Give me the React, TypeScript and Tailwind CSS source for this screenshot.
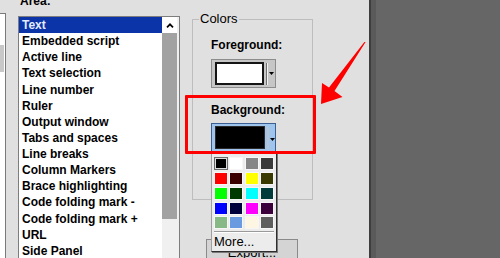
const items = [
  'Text',
  'Embedded script',
  'Active line',
  'Text selection',
  'Line number',
  'Ruler',
  'Output window',
  'Tabs and spaces',
  'Line breaks',
  'Column Markers',
  'Brace highlighting',
  'Code folding mark -',
  'Code folding mark +',
  'URL',
  'Side Panel',
];

const palette = [
  '#000000', '#ffffff', '#868686', '#3a3a3a',
  '#ff0000', '#3a0000', '#ffff00', '#3a3a00',
  '#00ff00', '#003a00', '#00ffff', '#003c3c',
  '#0000ff', '#00003c', '#ff00ff', '#3c003c',
  '#86b986', '#6a9be0', '#fdf6e2', '#5e5e5e',
];

function DownArrow() {
  return (
    <svg width="5" height="3" viewBox="0 0 5 3" className="shrink-0">
      <path d="M0 0 H5 L2.5 3 Z" fill="#000" />
    </svg>
  );
}

export default function App() {
  return (
    <div className="relative w-[500px] h-[258px] overflow-hidden bg-[#e0e0e0] flex items-start font-['Liberation_Sans',Arial,sans-serif] text-black">
      {/* previous list, cut off at the left edge */}
      <div className="w-[6px] h-[245px] mt-[13px] bg-white border-t border-r border-[#7a7a7a]">
        <div className="mt-[31px] w-[4px] h-[27px] bg-[#c8c8c8]" />
      </div>

      {/* Area list */}
      <div className="ml-[12px] w-[162px] flex flex-col">
        <div className="-mt-[7px] pl-[2px] text-[12px] leading-4 font-bold">Area:</div>
        <div className="mt-[7px] h-[260px] flex border border-[#7d7d7d] bg-white">
          <div className="w-[143px] flex flex-col">
            {items.map((item, i) => (
              <div
                key={item}
                className={
                  i === 0
                    ? 'h-[16.14px] leading-4 pl-[3px] text-[12px] font-bold bg-[#0b34a8] text-[#e4ecff] whitespace-nowrap'
                    : 'h-[16.14px] leading-4 pl-[3px] text-[12px] font-bold whitespace-nowrap'
                }
              >
                {item}
              </div>
            ))}
          </div>
          <div className="w-[17px] flex flex-col bg-[#f0f0f0]">
            <div className="h-[16px] w-[15px] bg-white flex items-center justify-center">
              <svg width="8" height="5" viewBox="0 0 8 5">
                <path d="M1 4.3 L4 1.3 L7 4.3" fill="none" stroke="#000" strokeWidth="1.7" />
              </svg>
            </div>
            <div className="h-[186px] w-[15px] bg-[#a2a2a2]" />
          </div>
        </div>
      </div>

      {/* Colors group + Export */}
      <div className="ml-[12px] w-[121px] flex flex-col">
        <fieldset className="mt-[11px] h-[189px] border border-[#bdbdbd] pl-[18px]">
          <legend className="ml-[-12px] px-[1px] text-[13px] leading-4">Colors</legend>
          <div className="mt-[10px] text-[12px] leading-4 font-bold">Foreground:</div>
          <div className="mt-[6px] w-[65px] h-[29px] border border-[#8c8c8c] bg-[#c6c6c6] flex items-center pl-[3px]">
            <div className="w-[49px] h-[23px] border-2 border-[#151515] bg-white" />
            <div className="ml-[2px] w-[2px] h-[22px] border-l border-r border-l-[#6e6e6e] border-r-[#f2f2f2]" />
            <div className="ml-[1px]"><DownArrow /></div>
          </div>
          <div className="mt-[14px] text-[12px] leading-4 font-bold">Background:</div>
          <div className="mt-[5px] w-[65px] h-[29px] border border-[#3b5f92] bg-[#a0c5ec] flex items-center pl-[3px]">
            <div className="w-[50px] h-[23px] border border-[#2a2a2a] bg-black" />
            <div className="ml-[2px] w-[2px] h-[22px] bg-[#b8c4d0]" />
            <div className="ml-[1px] mt-[4px]"><DownArrow /></div>
          </div>
        </fieldset>
        <div className="mt-[39px] ml-[14px] w-[92px] h-[30px] border border-[#8a8a8a] bg-[#d4d4d4] pt-[5px] text-center text-[13px] leading-4">
          Export...
        </div>
      </div>

      {/* dark area on the right */}
      <div className="ml-[56px] flex-1 h-full flex">
        <div className="w-[2px] bg-[#3e3e3e]" />
        <div className="w-[5px] bg-[#5a5a5a]" />
        <div className="flex-1 bg-[#666666]" />
      </div>

      {/* colour picker popup */}
      <div className="absolute left-[211px] top-[153px] w-[66px] h-[99px] bg-[#ececec] border border-[#a0a0a0] border-r-[#2e2e2e] border-b-[#2e2e2e] pl-[2px] pt-[3px] shadow-[1px_1px_0_#7a7a7a]">
        <div className="grid grid-cols-[repeat(4,14px)] gap-x-[1.33px] gap-y-[1.85px]">
          {palette.map((c, i) =>
            i === 0 ? (
              <div key={i} className="w-[14px] h-[13px] border border-[#6b6b6b] p-[1px] bg-[#dcdcdc]">
                <div className="w-full h-full bg-black" />
              </div>
            ) : (
              <div key={i} className="w-[14px] h-[13px] border border-[#f6f6f6]" style={{ backgroundColor: c }} />
            )
          )}
        </div>
        <div className="mt-[1.5px] w-[60px] h-[2px] border-t border-b border-t-[#9a9a9a] border-b-white" />
        <div className="mt-[1px] text-[13px] leading-4">More...</div>
      </div>

      {/* red annotation */}
      <div className="absolute left-[185px] top-[95px] w-[131px] h-[59px] border-[3px] border-[#ff0000] rounded-[1px]" />
      <svg className="absolute left-[318px] top-[40px]" width="50" height="66" viewBox="0 0 50 66">
        <polygon points="47.6,2 16.5,51 24.5,57 3,64 4,43 11,47.5 46.4,2" fill="#ff0000" />
      </svg>
    </div>
  );
}
